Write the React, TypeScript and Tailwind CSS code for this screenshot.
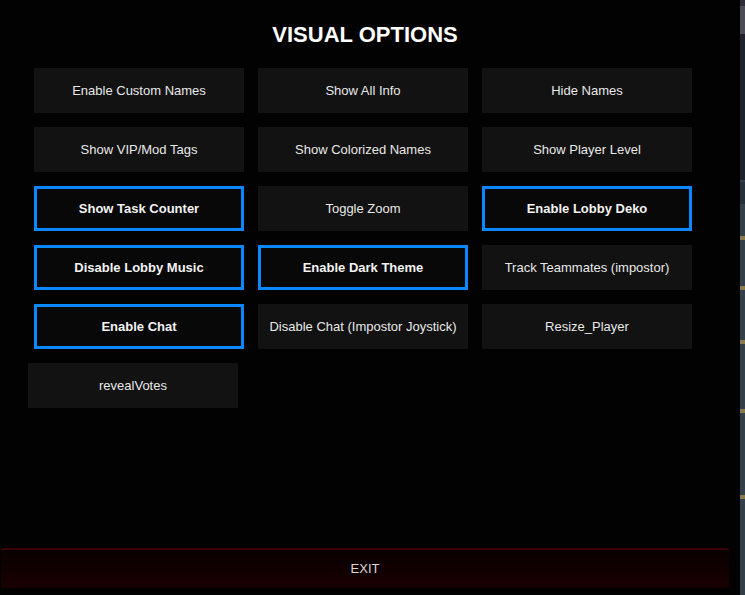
const options = [
  { label: "Enable Custom Names", active: false },
  { label: "Show All Info", active: false },
  { label: "Hide Names", active: false },
  { label: "Show VIP/Mod Tags", active: false },
  { label: "Show Colorized Names", active: false },
  { label: "Show Player Level", active: false },
  { label: "Show Task Counter", active: true },
  { label: "Toggle Zoom", active: false },
  { label: "Enable Lobby Deko", active: true },
  { label: "Disable Lobby Music", active: true },
  { label: "Enable Dark Theme", active: true },
  { label: "Track Teammates (impostor)", active: false },
  { label: "Enable Chat", active: true },
  { label: "Disable Chat (Impostor Joystick)", active: false },
  { label: "Resize_Player", active: false },
];

function OptionButton({ label, active }: { label: string; active: boolean }) {
  return (
    <button
      className={
        active
          ? "flex h-[45px] w-[210px] items-center justify-center border-[3px] border-[#0a88ff] bg-[#080808] text-[13px] font-bold text-[#f2f2f2]"
          : "flex h-[45px] w-[210px] items-center justify-center bg-[#121212] text-[13px] text-[#e8e8e8]"
      }
    >
      {label}
    </button>
  );
}

// sliver of the game scene visible behind the menu
function SceneStrip() {
  return (
    <svg width="5" height="595" viewBox="0 0 5 595" className="block">
      <rect x="0" y="0" width="5" height="595" fill="#1e222c" />
      <rect x="0" y="0" width="5" height="6" fill="#2a2f38" />
      <rect x="0" y="6" width="5" height="28" fill="#4a4d55" />
      <rect x="0" y="180" width="5" height="415" fill="#343f4c" />
      <rect x="0" y="182" width="5" height="22" fill="#26303c" />
      {[236, 286, 340, 409, 495].map((y) => (
        <rect key={y} x="0" y={y} width="5" height="4" fill="#8a7a4a" />
      ))}
    </svg>
  );
}

export default function App() {
  return (
    <div
      className="flex h-[595px] w-[745px] bg-black"
      style={{ fontFamily: '"Liberation Sans", Arial, sans-serif' }}
    >
      <div className="flex h-full w-[740px] flex-col bg-[#020202]">
        <h1 className="w-[730px] pt-6 text-center text-[22px] leading-[22px] font-bold text-white">
          VISUAL OPTIONS
        </h1>

        <div className="mt-[22px] ml-[34px] grid w-[658px] grid-cols-3 gap-[14px]">
          {options.map((o) => (
            <OptionButton key={o.label} label={o.label} active={o.active} />
          ))}
          <div className="-ml-1.5">
            <OptionButton label="revealVotes" active={false} />
          </div>
        </div>

        <button className="mt-auto mb-[7px] ml-px flex h-[40px] w-[728px] items-center justify-center rounded-[3px] border-t-2 border-[#3d0006] bg-gradient-to-b from-[#0a0000] to-[#190000] text-[13px] text-[#d8d8d8]">
          EXIT
        </button>
      </div>
      <SceneStrip />
    </div>
  );
}
